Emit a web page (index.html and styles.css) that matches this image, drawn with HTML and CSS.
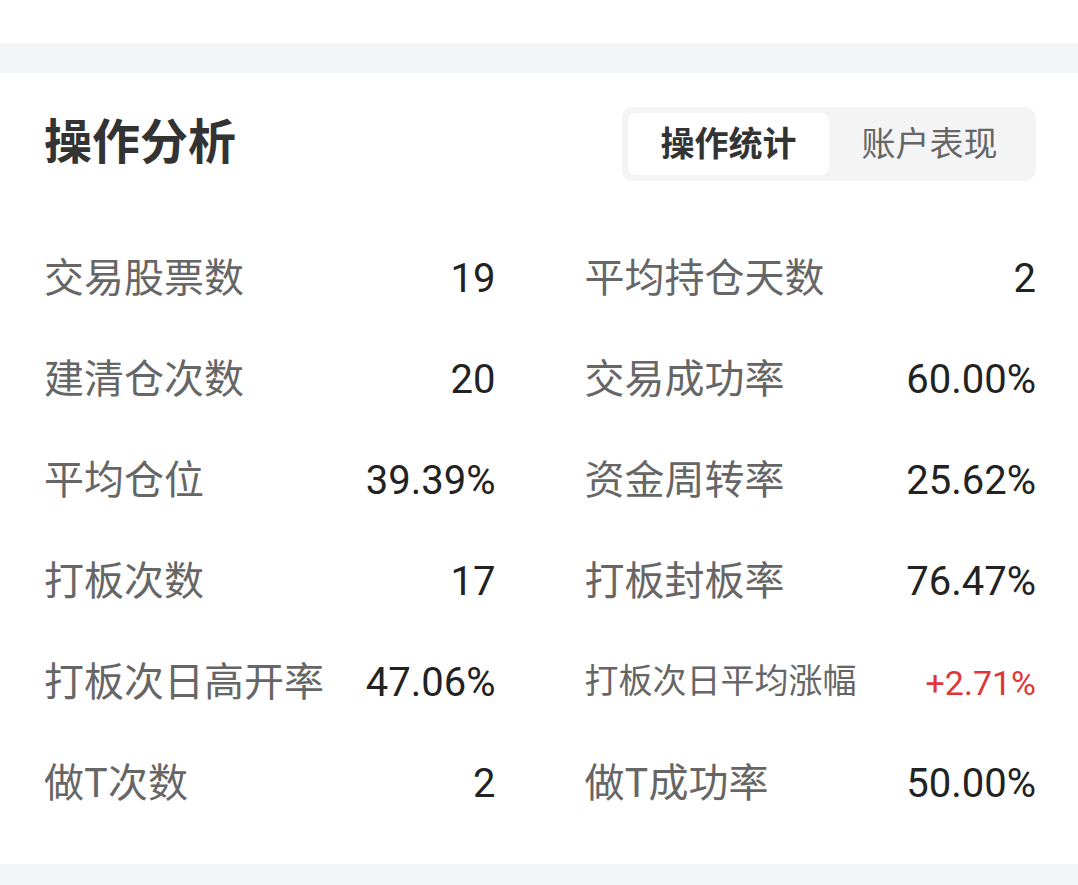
FILE: index.html
```html
<!DOCTYPE html>
<html lang="zh-CN">
<head>
    <meta charset="UTF-8">
    <title>操作分析</title>
    <link rel="stylesheet" href="styles.css">
</head>
<body>
    <div class="top"></div>
    <div class="gap"></div>
    <div class="card">
        <div class="head">
            <h2 class="title">操作分析</h2>
            <div class="tabs">
                <div class="tab active">操作统计</div>
                <div class="tab">账户表现</div>
            </div>
        </div>
        <div class="stats">
            <div class="row"><span class="label">交易股票数</span><span class="val">19</span></div>
            <div class="row"><span class="label">平均持仓天数</span><span class="val">2</span></div>
            <div class="row"><span class="label">建清仓次数</span><span class="val">20</span></div>
            <div class="row"><span class="label">交易成功率</span><span class="val">60.00%</span></div>
            <div class="row"><span class="label">平均仓位</span><span class="val">39.39%</span></div>
            <div class="row"><span class="label">资金周转率</span><span class="val">25.62%</span></div>
            <div class="row"><span class="label">打板次数</span><span class="val">17</span></div>
            <div class="row"><span class="label">打板封板率</span><span class="val">76.47%</span></div>
            <div class="row"><span class="label">打板次日高开率</span><span class="val">47.06%</span></div>
            <div class="row"><span class="label small">打板次日平均涨幅</span><span class="val up">+2.71%</span></div>
            <div class="row"><span class="label">做T次数</span><span class="val">2</span></div>
            <div class="row"><span class="label">做T成功率</span><span class="val">50.00%</span></div>
        </div>
    </div>
    <div class="gap"></div>
</body>
</html>
```

FILE: styles.css
```css
body{
    margin: 0;
    background-color: #fff;
    font-family: "Noto Sans CJK SC", "Noto Sans", sans-serif;
    color: #333;
}

.top{
    height: 43px;
}

.gap{
    height: 30px;
    background-color: #f4f5f7;
}

.card{
    padding: 34px 42px 30px 44px;
}

.head{
    display: flex;
    justify-content: space-between;
    align-items: center;
    height: 74px;
}

.title{
    margin: 0;
    padding-bottom: 12px;
    font-size: 48px;
    font-weight: 700;
    color: #333;
    line-height: 1;
}

.tabs{
    display: flex;
    background-color: #f4f4f4;
    border-radius: 11px;
    padding: 6px;
}

.tab{
    width: 201px;
    height: 62px;
    box-sizing: border-box;
    padding-bottom: 6px;
    display: flex;
    justify-content: center;
    align-items: center;
    font-size: 34px;
    color: #666;
}

.tab.active{
    background-color: #fff;
    border-radius: 8px;
    font-weight: 700;
    color: #333;
}

.stats{
    display: grid;
    grid-template-columns: 1fr 1fr;
    column-gap: 89px;
    margin-top: 47px;
}

.row{
    height: 101px;
    display: flex;
    justify-content: space-between;
    align-items: center;
}

.label{
    padding-bottom: 8px;
    font-size: 40px;
    color: #666;
}

.label.small{
    font-size: 34px;
}

.val{
    font-family: Roboto, "Liberation Sans", sans-serif;
    font-size: 40px;
    color: #222;
}

.val.up{
    font-size: 34px;
    color: #e0353b;
}
```
